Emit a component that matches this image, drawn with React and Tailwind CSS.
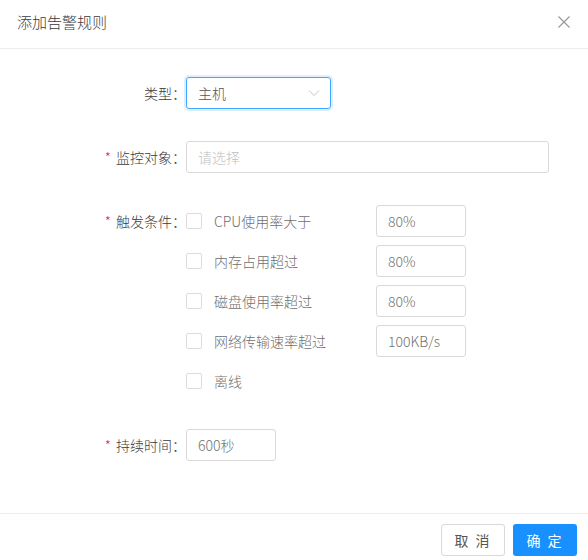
import React from "react";

const conditions = [
  { label: "CPU使用率大于", value: "80%" },
  { label: "内存占用超过", value: "80%" },
  { label: "磁盘使用率超过", value: "80%" },
  { label: "网络传输速率超过", value: "100KB/s" },
  { label: "离线", value: null },
];

const Label = ({ text, required }) => (
  <div className="w-[186px] shrink-0 h-[32px] text-right leading-[32px] text-[14px] text-[#3a3a3a] font-light">
    {required && <span className="mr-[5px] text-[#f5222d]">*</span>}
    {text}
  </div>
);

const Checkbox = () => (
  <span className="block w-4 h-4 rounded-[2px] border border-[#dcdcdc] bg-white" />
);

export default function App() {
  return (
    <div
      className="w-[588px] h-[560px] bg-white flex flex-col overflow-hidden"
      style={{ fontFamily: '"Noto Sans CJK SC", "Noto Sans", sans-serif' }}
    >
      {/* header */}
      <div className="h-[49px] shrink-0 flex items-center justify-between pl-[17px] pr-[18px] border-b border-[#ececec]">
        <span className="text-[15px] text-[#3a3a3a] font-light -mt-[4px]">添加告警规则</span>
        <svg width="12" height="12" viewBox="0 0 12 12" className="-mt-[4px]">
          <path d="M0.5 0.5 L11.5 11.5 M11.5 0.5 L0.5 11.5" stroke="#999" strokeWidth="1.2" fill="none" />
        </svg>
      </div>

      {/* body */}
      <div className="flex-1 pt-[28px] flex flex-col gap-8">
        <div className="flex">
          <Label text="类型：" />
          <div className="w-[145px] h-[32px] rounded-[3px] border border-[#40a9ff] shadow-[0_0_0_2px_rgba(24,144,255,0.15)] flex items-center justify-between pl-[11px] pr-[10px]">
            <span className="text-[14px] text-[#555] font-light">主机</span>
            <svg width="12" height="8" viewBox="0 0 12 8">
              <path d="M1 1.5 L6 6.5 L11 1.5" stroke="#c0c4cc" strokeWidth="1" fill="none" />
            </svg>
          </div>
        </div>

        <div className="flex">
          <Label text="监控对象：" required />
          <div className="w-[363px] h-[32px] rounded-[3px] border border-[#d9d9d9] flex items-center pl-[11px]">
            <span className="text-[14px] text-[#bfbfbf] font-light">请选择</span>
          </div>
        </div>

        <div className="flex">
          <Label text="触发条件：" required />
          <div className="flex flex-col gap-2">
            {conditions.map((c) => (
              <div key={c.label} className="flex items-center h-[32px]">
                <Checkbox />
                <span className="ml-3 w-[162px] text-[14px] text-[#707070] font-light">{c.label}</span>
                {c.value && (
                  <div className="w-[90px] h-[32px] rounded-[3px] border border-[#d9d9d9] flex items-center pl-[11px]">
                    <span className="text-[14px] text-[#707070] font-light">{c.value}</span>
                  </div>
                )}
              </div>
            ))}
          </div>
        </div>

        <div className="flex">
          <Label text="持续时间：" required />
          <div className="w-[90px] h-[32px] rounded-[3px] border border-[#d9d9d9] flex items-center pl-[11px]">
            <span className="text-[14px] text-[#707070] font-light">600秒</span>
          </div>
        </div>
      </div>

      {/* footer */}
      <div className="h-[47px] shrink-0 border-t border-[#ececec] flex justify-end gap-2 pt-[10px] pr-[11px]">
        <button className="w-[64px] h-[32px] rounded-[3px] border border-[#d9d9d9] bg-white text-[14px] text-[#555] tracking-[2px]">
          取 消
        </button>
        <button className="w-[64px] h-[32px] rounded-[3px] bg-[#1890ff] text-[14px] text-white tracking-[2px]">
          确 定
        </button>
      </div>
    </div>
  );
}
